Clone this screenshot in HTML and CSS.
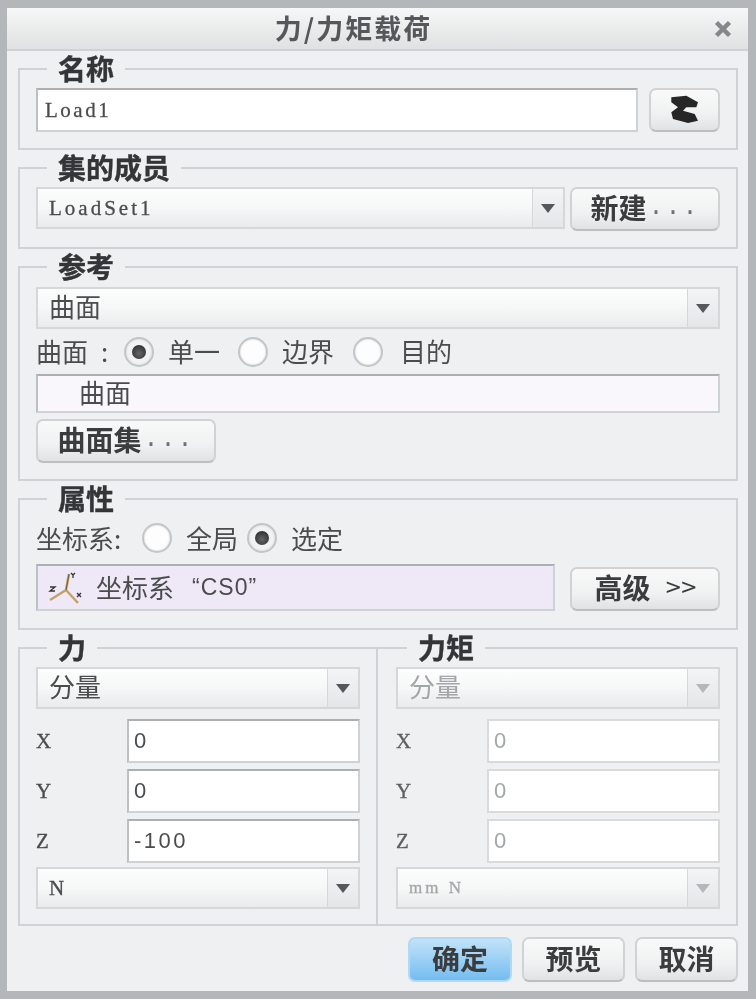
FILE: index.html
```html
<!DOCTYPE html>
<html lang="zh">
<head>
<meta charset="utf-8">
<title>力/力矩载荷</title>
<link rel="stylesheet" href="styles.css">
</head>
<body>
<div class="dialog">
  <header class="titlebar">
    <h1 class="title">力/力矩载荷</h1>
    <svg class="close" viewBox="0 0 18 18" width="18" height="18"><path d="M2.500 2.500 15.500 15.500M15.500 2.500 2.500 15.500" fill="none" stroke="#84888b" stroke-width="4.500"/></svg>
  </header>
  <main class="content">
    <fieldset class="group g-name">
      <legend>名称</legend>
      <div class="row">
        <div class="field grow mono name">Load1</div>
        <button class="btn btn-icon">
          <svg viewBox="0 0 30 30" width="30" height="30"><path d="M1.300 2.300 16.300.7 28 7.300 26.300 12.300H16.300L13 15.700 24.700 19 28 25.700 18 28 3 24 1.300 17.300 8 12.300 1.300 7.300Z" fill="#262626"/></svg>
        </button>
      </div>
    </fieldset>
    <fieldset class="group g-set">
      <legend>集的成员</legend>
      <div class="row row-set">
        <div class="select grow"><span class="value mono">LoadSet1</span><span class="arrow"></span></div>
        <button class="btn btn-wide">新建<span class="dots">...</span></button>
      </div>
    </fieldset>
    <fieldset class="group g-ref">
      <legend>参考</legend>
      <div class="select s-ref"><span class="value">曲面</span><span class="arrow"></span></div>
      <div class="radios r-ref">
        <span class="lbl">曲面<span class="colon">:</span></span>
        <span class="radio on r1"></span><span class="opt">单一</span>
        <span class="radio r2"></span><span class="opt">边界</span>
        <span class="radio r3"></span><span class="opt">目的</span>
      </div>
      <div class="field tint surface">曲面</div>
      <button class="btn btn-set">曲面集<span class="dots">...</span></button>
    </fieldset>
    <fieldset class="group g-prop">
      <legend>属性</legend>
      <div class="radios r-prop">
        <span class="lbl">坐标系:</span>
        <span class="radio r4"></span><span class="opt">全局</span>
        <span class="radio on r5"></span><span class="opt">选定</span>
      </div>
      <div class="row row-cs">
        <div class="field grow lilac">
          <svg class="csys" viewBox="0 0 40 36" width="40" height="36">
            <path d="M23 4 20 20 4 30M20 20 32 33" fill="none" stroke="#c4a266" stroke-width="2.500"/>
            <path d="M23 4 20 20" fill="none" stroke="#6d5a35" stroke-width="1"/>
            <path d="M25 3 27 5 29 3M27 5V8M4 17H9L4 21H9M31 23 35 27M35 23 31 27" fill="none" stroke="#333" stroke-width="1.300"/>
          </svg>
          <span class="cs-label">坐标系</span><span class="quoted">“CS0”</span>
        </div>
        <button class="btn btn-adv">高级<span class="chev">&gt;&gt;</span></button>
      </div>
    </fieldset>
    <div class="split">
      <fieldset class="group half left">
        <legend>力</legend>
        <div class="select s-half"><span class="value">分量</span><span class="arrow"></span></div>
        <div class="axis"><span class="mono">X</span><div class="field num">0</div></div>
        <div class="axis"><span class="mono">Y</span><div class="field num">0</div></div>
        <div class="axis"><span class="mono">Z</span><div class="field num">-100</div></div>
        <div class="select s-unit"><span class="value mono">N</span><span class="arrow"></span></div>
      </fieldset>
      <fieldset class="group half right off">
        <legend>力矩</legend>
        <div class="select s-half"><span class="value">分量</span><span class="arrow"></span></div>
        <div class="axis"><span class="mono">X</span><div class="field num">0</div></div>
        <div class="axis"><span class="mono">Y</span><div class="field num">0</div></div>
        <div class="axis"><span class="mono">Z</span><div class="field num">0</div></div>
        <div class="select s-unit"><span class="value mono small">mm N</span><span class="arrow"></span></div>
      </fieldset>
    </div>
    <footer class="actions">
      <button class="btn btn-act primary">确定</button>
      <button class="btn btn-act">预览</button>
      <button class="btn btn-act">取消</button>
    </footer>
  </main>
</div>
</body>
</html>
```
FILE: styles.css
```css
* { box-sizing: border-box; }
html, body { margin: 0; padding: 0; }
body {
  width: 756px;
  height: 999px;
  overflow: hidden;
  font-family: "Noto Sans CJK SC", "Liberation Sans", sans-serif;
  font-size: 26px;
  color: #4a4c4e;
}
.dialog {
  width: 756px;
  height: 999px;
  padding: 8px 8px 8px 7px;
  background: #b4b7b9;
  display: flex;
  flex-direction: column;
  filter: blur(0.6px);
}
.titlebar {
  height: 43px;
  flex: none;
  display: flex;
  align-items: center;
  justify-content: center;
  padding-right: 48px;
  position: relative;
  background: linear-gradient(#f6f7f7, #dfe1e2);
  border-bottom: 2px solid #cfd2d4;
}
.title {
  margin: -1px 0 0;
  font-size: 27px;
  font-weight: 700;
  letter-spacing: 2px;
  line-height: 40px;
  color: #55575a;
}
.close { position: absolute; right: 16px; top: 12px; }
.content {
  flex: 1;
  padding: 4px 10px 0 11px;
  background: #eef0f1;
  display: flex;
  flex-direction: column;
}
.mono { font-family: "Liberation Serif", serif; font-size: 21px; letter-spacing: 3px; -webkit-text-stroke: 0.3px; }
.name { letter-spacing: 2.500px; }
.num { font-family: "Liberation Sans", sans-serif; font-size: 22px; letter-spacing: 2.500px; }
.group {
  margin: 0 0 4px;
  padding: 0 16px;
  min-width: 0;
  border: 2px solid #cfd2d4;
}
.group legend {
  margin-left: 11px;
  padding: 0 11px;
  height: 28px;
  font-size: 28px;
  font-weight: 700;
  line-height: 27px;
  color: #333537;
  -webkit-text-stroke: 0.4px;
}
.row { display: flex; }
.grow { flex: 1; min-width: 0; }
.g-name { height: 95px; padding-top: 5px; }
.g-set { height: 95px; padding-top: 5px; }
.g-ref { height: 228px; padding-top: 6px; }
.g-prop { height: 145px; padding-top: 6px; }
.field {
  height: 44px;
  display: flex;
  align-items: center;
  padding-left: 5px;
  background: #fff;
  border: 2px solid #cfd2d4;
  border-top-color: #adb0b2;
  border-left-color: #bdc0c2;
}
.name { padding-left: 7px; }
.select {
  height: 42px;
  display: flex;
  align-items: center;
  background: linear-gradient(#fdfdfd, #f6f7f7 50%, #e9ebec);
  border: 2px solid #d5d8d9;
}
.value { flex: 1; padding: 0 0 6px 11px; }
.value.mono { padding-bottom: 0; }
.arrow {
  width: 31px;
  align-self: stretch;
  flex: none;
  border-left: 1px solid #d5d8d9;
  background: linear-gradient(#f3f4f5, #e4e6e7);
  display: flex;
  align-items: center;
  justify-content: center;
}
.arrow::after {
  content: "";
  border-style: solid;
  border-width: 9px 7px 0;
  border-color: #54585c transparent transparent;
}
.btn {
  padding: 0 0 4px;
  font: inherit;
  font-size: 28px;
  font-weight: 700;
  color: #3a3c3e;
  background: linear-gradient(#f9f9f9, #f0f1f2 60%, #e1e2e3);
  border: 2px solid #d0d2d4;
  border-bottom-color: #bcbec0;
  border-radius: 7px;
  display: flex;
  align-items: center;
  justify-content: center;
}
.dots {
  font-family: "Liberation Mono", monospace;
  font-weight: 400;
  font-size: 25px;
  color: #6f7173;
  letter-spacing: 2px;
  margin-left: 2px;
}
.btn-icon { width: 71px; height: 44px; margin-left: 11px; padding: 0; }
.row-set .select { width: 529px; }
.btn-wide { width: 150px; height: 44px; margin-left: 5px; }
.radios { display: flex; align-items: center; }
.radios .lbl, .radios .opt { padding-bottom: 2px; }
.r-ref { height: 45px; }
.r-ref .lbl { width: 88px; flex: none; }
.r-prop { height: 38px; }
.r-prop .lbl { width: 106px; flex: none; }
.colon { margin-left: 13px; }
.radio {
  width: 30px;
  height: 30px;
  flex: none;
  border-radius: 50%;
  border: 2px solid #c3c6c8;
  background: #fdfdfd;
  box-shadow: inset 0 0 2px #c9c9c9;
  display: flex;
  align-items: center;
  justify-content: center;
}
.radio.on { background: #f1f2f3; }
.radio.on::after {
  content: "";
  width: 14px;
  height: 14px;
  border-radius: 50%;
  background: radial-gradient(circle at 50% 60%, #666, #222);
}
.r1 { margin-right: 14px; }
.r2 { margin-left: 18px; margin-right: 14px; }
.r3 { margin-left: 19px; margin-right: 17px; }
.r4 { margin-right: 14px; }
.r5 { margin-left: 9px; margin-right: 14px; }
.surface { height: 39px; padding: 0 0 5px 41px; }
.tint { background: #f9f6fc; }
.btn-set { width: 180px; height: 44px; margin-top: 6px; }
.row-cs { align-items: flex-end; margin-top: 7px; }
.lilac { height: 47px; background: #efe9f7; margin-right: 15px; padding-left: 8px; }
.csys { margin-right: 10px; flex: none; }
.cs-label { padding-bottom: 2px; }
.quoted { margin-left: 18px; font-family: "Liberation Sans", sans-serif; font-size: 23px; letter-spacing: 1px; }
.btn-adv { width: 150px; height: 44px; flex: none; }
.chev { margin-left: 14px; font-weight: 400; font-family: "DejaVu Sans", sans-serif; font-size: 21px; letter-spacing: -2px; }
.split { display: flex; height: 292px; }
.half { width: 360px; height: 292px; margin: 0; padding-top: 5px; }
.half.right { border-left: 0; padding-left: 18px; }
.s-half, .s-unit { height: 42px; }
.axis {
  display: grid;
  grid-template-columns: 91px 1fr;
  align-items: center;
  margin-top: 6px;
}
.s-half + .axis { margin-top: 10px; }
.s-unit { margin-top: 4px; }
.off { color: #a3a6a8; }
.off legend { color: #333537; }
.off .field { border-color: #d8dadc; }
.off .axis > span { color: #5d5f61; }
.off .arrow::after { border-top-color: #b5b8ba; }
.small { font-size: 17px; }
.actions { display: flex; justify-content: flex-end; gap: 10px; margin-top: 11px; }
.btn-act { width: 103px; height: 45px; }
.primary { width: 104px; background: linear-gradient(#c2e3f9, #74bdf0); border-color: #b0d9f6; }
```
